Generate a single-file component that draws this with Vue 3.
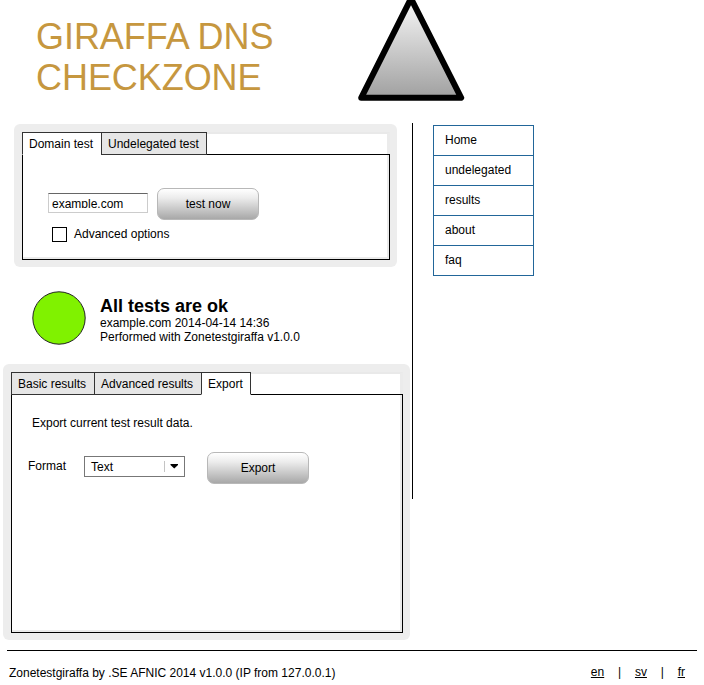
<script setup>
import { ref } from 'vue'

const domain = ref('example.com')
const advanced = ref(false)
const testTabs = ['Domain test', 'Undelegated test']
const resultTabs = ['Basic results', 'Advanced results', 'Export']
const testTab = ref('Domain test')
const resultTab = ref('Export')
const menu = ['Home', 'undelegated', 'results', 'about', 'faq']
</script>

<template>
  <div class="page">
    <header class="header">
      <h1 class="title">GIRAFFA DNS<br />CHECKZONE</h1>
      <svg class="logo" width="112" height="104" viewBox="355 0 112 104">
        <defs>
          <linearGradient id="tri" x1="0" y1="0" x2="0" y2="1">
            <stop offset="0" stop-color="#f8f8f8" />
            <stop offset="1" stop-color="#a0a0a0" />
          </linearGradient>
        </defs>
        <path d="M411 -1.5 L461.2 97.8 H361.2 Z" fill="url(#tri)" stroke="#000" stroke-width="6" stroke-linejoin="round" />
      </svg>
    </header>

    <div class="columns">
      <main class="main">
        <section class="panel panel-test">
          <div class="tabs">
            <button v-for="t in testTabs" :key="t" class="tab" :class="{ active: t === testTab }" @click="testTab = t">{{ t }}</button>
            <span class="tabs-rest"></span>
          </div>
          <div class="body">
            <div class="row">
              <div class="field">
                <input v-model="domain" class="input" type="text" />
              </div>
              <button class="btn">test now</button>
            </div>
            <label class="check">
              <input v-model="advanced" class="box" type="checkbox" />
              <span class="check-label">Advanced options</span>
            </label>
          </div>
        </section>

        <section class="status">
          <svg class="light" width="54" height="54" viewBox="0 0 54 54">
            <circle cx="27" cy="27" r="26.2" fill="#80f200" stroke="#222" stroke-width="1" />
          </svg>
          <div>
            <h2 class="status-title">All tests are ok</h2>
            <p class="status-line">example.com 2014-04-14 14:36</p>
            <p class="status-line">Performed with Zonetestgiraffa v1.0.0</p>
          </div>
        </section>

        <section class="panel panel-results">
          <div class="tabs">
            <button v-for="t in resultTabs" :key="t" class="tab" :class="{ active: t === resultTab }" @click="resultTab = t">{{ t }}</button>
            <span class="tabs-rest"></span>
          </div>
          <div class="body">
            <p class="hint">Export current test result data.</p>
            <div class="export">
              <span class="format">Format</span>
              <div class="select">
                <span class="select-value">Text</span>
                <svg width="19" height="19" viewBox="0 0 19 19">
                  <path d="M0.5 4 V15" stroke="#c4c4c4" />
                  <path d="M6.5 7 H14 V8 L10.25 11.5 L6.5 8 Z" fill="#000" />
                </svg>
              </div>
              <button class="btn">Export</button>
            </div>
          </div>
        </section>
      </main>

      <nav class="menu">
        <a v-for="m in menu" :key="m" class="menu-item">{{ m }}</a>
      </nav>
    </div>

    <footer class="footer">
      <span>Zonetestgiraffa by .SE AFNIC 2014 v1.0.0 (IP from 127.0.0.1)</span>
      <div class="langs"><a>en</a><i>|</i><a>sv</a><i>|</i><a>fr</a></div>
    </footer>
  </div>
</template>

<style>
body {
  background: #fff;
}
</style>

<style scoped>
.page {
  width: 704px;
  height: 685px;
  overflow: hidden;
  font: 12px/14px 'Liberation Sans', Arial, sans-serif;
  color: #000;
}
.page * {
  box-sizing: border-box;
}
h1, h2, p {
  margin: 0;
}
button, input {
  font: inherit;
  color: inherit;
  margin: 0;
}
.header {
  display: flex;
  height: 123px;
}
.title {
  width: 319px;
  margin-left: 36px;
  padding-top: 16px;
  font-size: 36px;
  line-height: 41px;
  font-weight: 400;
  letter-spacing: -0.06px;
  font-kerning: normal;
  color: #c6973f;
}
.logo {
  display: block;
}
.columns {
  display: flex;
  height: 527px;
}
.main {
  width: 412px;
  padding-top: 1px;
}
.panel {
  display: flex;
  flex-direction: column;
  padding: 8px 7px 7px 8px;
  background: #ededed;
  border-radius: 6px;
}
.panel-test {
  width: 383px;
  height: 143px;
  margin-left: 14px;
}
.panel-results {
  width: 407px;
  height: 276px;
  margin-left: 3px;
}
.tabs {
  display: flex;
  height: 22px;
}
.tab {
  height: 23px;
  padding: 0 8px 0 6px;
  border: 1px solid #333;
  border-radius: 0;
  background: #e6e6e6;
  position: relative;
  white-space: nowrap;
}
.tab + .tab {
  margin-left: -1px;
}
.tab:nth-last-child(2) {
  padding-right: 7px;
}
.tab.active {
  background: #fff;
  border-bottom-color: #fff;
}
.tabs-rest {
  flex: 1;
  background: #fff;
  border-top: 2px solid #e9e9e9;
  border-right: 3px solid #ebebeb;
}
.body {
  flex: 1;
  background: #fff;
  border: 1px solid #000;
  box-shadow: inset -2px -2px #ebebeb;
}
.row {
  display: flex;
  padding: 33px 0 0 25px;
}
.field {
  width: 100px;
  height: 20px;
  margin: 5px 9px 0 0;
  padding: 1px 0 0 3px;
  border: 1px solid #ccc;
  border-top-color: #666;
  background: #fff;
}
.input {
  display: block;
  width: 92px;
  height: 13px;
  padding: 5px 0 0;
  border: 0;
  background: transparent;
  outline: none;
  overflow: clip;
}
.btn {
  width: 102px;
  height: 32px;
  padding: 0;
  border: 1px solid #b8b8b8;
  border-radius: 7px;
  background: linear-gradient(#fff, #ececec 30%, #a8a8a8);
}
.check {
  display: flex;
  gap: 7px;
  margin: 7px 0 0 29px;
}
.check-label {
  height: 14px;
}
.box {
  appearance: none;
  width: 15px;
  height: 15px;
  border: 1px solid #000;
  background: #fff;
}
.status {
  display: flex;
  height: 97px;
  padding: 24px 0 0 32px;
  gap: 14px;
}
.status-title {
  margin-top: 5px;
  font-size: 18px;
  line-height: 20px;
}
.status-line {
  line-height: 14px;
}
.hint {
  margin: 21px 0 0 20px;
}
.export {
  display: flex;
  padding: 22px 0 0 16px;
}
.format {
  width: 56px;
  padding-top: 7px;
}
.select {
  display: flex;
  width: 101px;
  height: 21px;
  margin: 4px 22px 0 0;
  border: 1px solid #777;
  padding-left: 6px;
}
.select-value {
  width: 73px;
  padding-top: 3px;
}
.menu {
  width: 122px;
  height: 376px;
  padding: 2px 0 0 20px;
  border-left: 1px solid #000;
}
.menu-item {
  display: block;
  height: 31px;
  padding: 7px 11px;
  border: 1px solid #226699;
}
.menu-item + .menu-item {
  margin-top: -1px;
}
.footer {
  display: flex;
  justify-content: space-between;
  margin: 0 7px;
  padding: 15px 12px 0 2px;
  border-top: 1px solid #000;
}
.langs {
  display: flex;
  gap: 13.8px;
  margin-top: -1px;
}
.langs a {
  text-decoration: underline;
}
.langs i {
  font-style: normal;
}
</style>
